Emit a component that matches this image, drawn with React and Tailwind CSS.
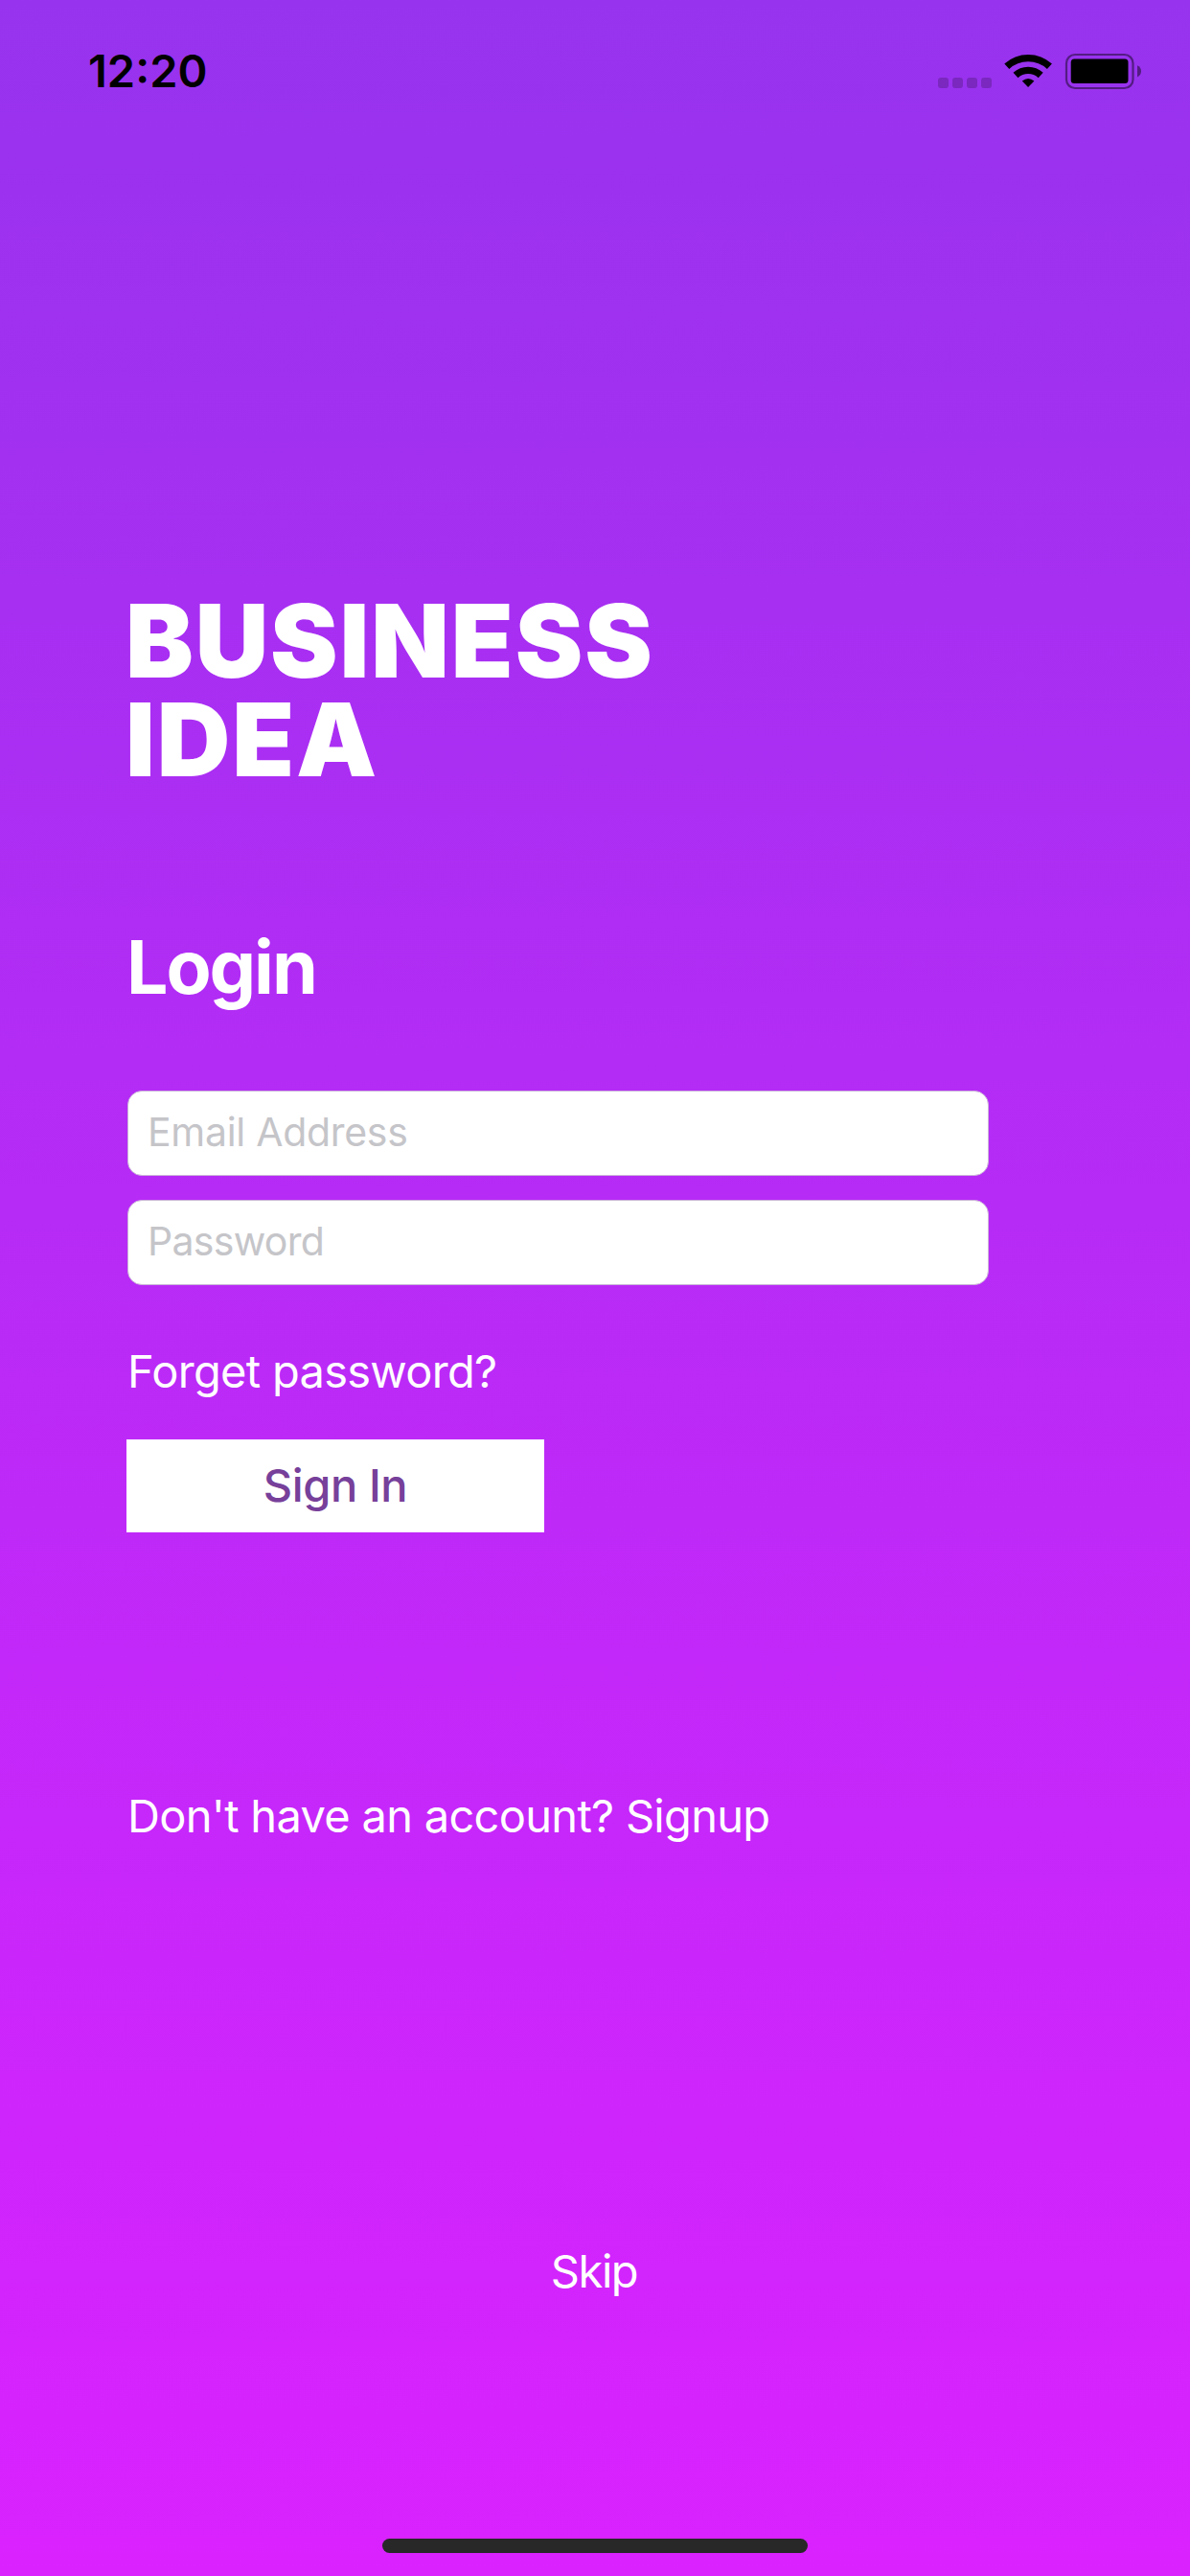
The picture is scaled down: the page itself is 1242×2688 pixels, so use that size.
// src/App.jsx
import React, { useState } from 'react';

const StatusBar = () => (
  <div className="flex h-[132px] items-start justify-between pl-[92px] pr-[50px] pt-[44px] text-black">
    <span className="w-[130px] whitespace-nowrap text-[47px] font-semibold leading-[60px]">12:20</span>
    <svg className="mt-[6px] h-[50px] w-[216px]" viewBox="976 50 216 50" fill="none">
      {/* signal dots */}
      <g fill="#000" fillOpacity="0.2">
        <rect x="979" y="81" width="11" height="11" rx="3" />
        <rect x="994" y="81" width="11" height="11" rx="3" />
        <rect x="1009" y="81" width="11" height="11" rx="3" />
        <rect x="1024" y="81" width="11" height="11" rx="3" />
      </g>
      {/* wifi */}
      <g stroke="#000" strokeWidth="7.4">
        <path d="M1050.8 69.3A33 33 0 0 1 1095.4 69.3" />
        <path d="M1060 78.4A19.5 19.5 0 0 1 1086.2 78.4" />
      </g>
      <path fill="#000" d="M1066.8 84.6Q1073.1 79.4 1079.4 84.6L1073.1 91Z" />
      {/* battery */}
      <rect x="1113" y="57" width="69.5" height="35" rx="9" stroke="#000" strokeOpacity="0.45" strokeWidth="2.2" />
      <rect x="1117.7" y="61.6" width="59.8" height="25.4" rx="3.5" fill="#000" />
      <path d="M1187 68.2Q1191 70 1191 74.3T1187 80.4Z" fill="#000" fillOpacity="0.45" />
    </svg>
  </div>
);

const App = () => {
  const [email, setEmail] = useState('');
  const [password, setPassword] = useState('');

  const inputClass =
    'block h-[89px] w-[899px] rounded-[15px] border border-[#cbb4d8] bg-white px-[20px] pb-[4px] text-[41px] text-gray-800 outline-none placeholder:text-[#c5c5c9]';

  return (
    <div className="flex h-[2688px] w-[1242px] flex-col overflow-hidden bg-linear-to-b/srgb from-[#9733ee] to-[#da22ff] font-['Inter',sans-serif] text-white">
      <StatusBar />

      <main className="flex flex-1 flex-col items-start pl-[133px]">
        <h1 className="-ml-[2px] mt-[485px] flex flex-col text-[106px] font-black leading-[103px] tracking-[1.9px]">
          <span>BUSINESS</span>
          <span>IDEA</span>
        </h1>

        <h2 className="-ml-px mt-[138px] text-[77px] font-bold leading-[96px] tracking-[-2.1px]">Login</h2>

        <form className="mt-[81px] flex flex-col items-start" onSubmit={(e) => e.preventDefault()}>
          <input
            type="email"
            placeholder="Email Address"
            value={email}
            onChange={(e) => setEmail(e.target.value)}
            className={`${inputClass} tracking-[-0.3px]`}
          />
          <div className="h-[25px]" />
          <input
            type="password"
            placeholder="Password"
            value={password}
            onChange={(e) => setPassword(e.target.value)}
            className={`${inputClass} tracking-[-0.7px]`}
          />
          <a className="mt-[60px] text-[47px] leading-[60px] tracking-[-0.7px]">Forget password?</a>
          <button
            type="submit"
            className="-ml-px mt-[41px] h-[97px] w-[436px] bg-white text-[47px] font-medium tracking-[-0.4px] text-[#77409a]"
          >
            Sign In
          </button>
        </form>

        <a className="mt-[266px] text-[47px] leading-[60px] tracking-[-0.7px]">Don't have an account? Signup</a>
      </main>

      <footer className="flex h-[348px] flex-col items-center justify-between pb-[24px]">
        <button className="pr-[2px] text-[47px] leading-[60px] tracking-[-1.4px]">Skip</button>
        <div className="h-[15px] w-[444px] rounded-full bg-[#282828]" />
      </footer>
    </div>
  );
};

export default App;
